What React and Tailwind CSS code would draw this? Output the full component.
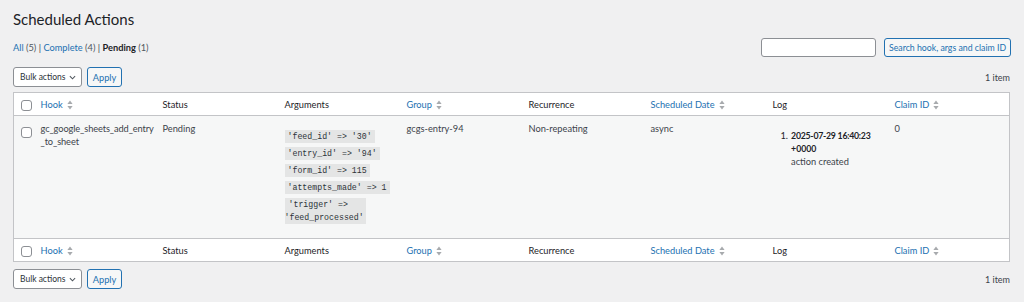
import React from 'react';

const font = { fontFamily: 'Lato, "Noto Sans", sans-serif' };
const mono = { fontFamily: '"Liberation Mono", "DejaVu Sans Mono", monospace' };

function SortIcon() {
  return (
    <svg width="6" height="10" viewBox="0 0 6 10" className="ml-[4px] inline-block align-middle -mt-[1px]">
      <path d="M3 0.5 L5.6 4 H0.4 Z" fill="#a7aaad" />
      <path d="M3 9.5 L5.6 6 H0.4 Z" fill="#a7aaad" />
    </svg>
  );
}

function Checkbox() {
  return <span className="inline-block w-[11px] h-[11px] rounded-[3px] border border-[#8c8f94] bg-white align-middle" />;
}

function Bulk() {
  return (
    <div className="flex items-center gap-[5px]">
      <div className="h-[20px] w-[69px] flex items-center justify-between pl-[6px] pr-[5px] border border-[#8c8f94] rounded-[3px] bg-white text-[8.5px] text-[#2c3338] whitespace-nowrap">
        <span>Bulk actions</span>
        <svg width="7" height="7" viewBox="0 0 8 8"><path d="M1 2.5 L4 5.5 L7 2.5" fill="none" stroke="#50575e" strokeWidth="1.2" /></svg>
      </div>
      <div className="h-[20px] w-[35px] flex items-center justify-center border border-[#2271b1] rounded-[3px] bg-[#f6f7f7] text-[9.25px] text-[#2271b1]">
        Apply
      </div>
    </div>
  );
}

const cols = [
  { label: 'Hook', sort: true },
  { label: 'Status' },
  { label: 'Arguments' },
  { label: 'Group', sort: true },
  { label: 'Recurrence' },
  { label: 'Scheduled Date', sort: true },
  { label: 'Log' },
  { label: 'Claim ID', sort: true },
];

function HeadRow({ bottom }) {
  return (
    <tr className={bottom ? 'border-t border-[#c3c4c7]' : 'border-b border-[#c3c4c7]'}>
      <td className="pl-[7px] h-[23px] align-middle"><Checkbox /></td>
      {cols.map((c) => (
        <td key={c.label} className="px-[7px] align-middle whitespace-nowrap">
          <span className={c.sort ? 'text-[#2271b1]' : 'text-[#1d2327]'}>{c.label}</span>
          {c.sort && <SortIcon />}
        </td>
      ))}
    </tr>
  );
}

const args = [
  "'feed_id' => '30'",
  "'entry_id' => '94'",
  "'form_id' => 115",
  "'attempts_made' => 1",
];

export default function App() {
  return (
    <div className="w-[1024px] h-[302px] bg-[#f0f0f1] text-[#3c434a] text-[9.25px] leading-[13px] px-[13px] pt-[8px]" style={font}>
      <h1 className="text-[15px] leading-[22px] text-[#1d2327] font-normal">Scheduled Actions</h1>
      <div className="flex items-start justify-between mt-[8px]">
        <div className="pt-[3px] text-[9.25px] whitespace-nowrap">
          <a className="text-[#2271b1]">All</a> <span className="text-[#50575e]">(5)</span> |{' '}
          <a className="text-[#2271b1]">Complete</a> <span className="text-[#50575e]">(4)</span> |{' '}
          <span className="font-bold text-[#1d2327]">Pending</span> <span className="text-[#50575e]">(1)</span>
        </div>
        <div className="flex items-center gap-[8px]">
          <div className="w-[115px] h-[19px] bg-white border border-[#8c8f94] rounded-[3px]" />
          <div className="h-[19px] w-[127px] flex items-center justify-center border border-[#2271b1] rounded-[3px] bg-[#f6f7f7] text-[8.75px] text-[#2271b1] whitespace-nowrap">
            Search hook, args and claim ID
          </div>
        </div>
      </div>
      <div className="flex items-center justify-between mt-[10px]">
        <Bulk />
        <span className="text-[9px] text-[#3c434a] pr-[1px]">1 item</span>
      </div>
      <table className="mt-[5px] w-[997px] table-fixed border border-[#c3c4c7] bg-white border-collapse">
        <colgroup>
          <col className="w-[20px]" />
          {cols.map((c) => <col key={c.label} className="w-[122px]" />)}
        </colgroup>
        <thead>
          <HeadRow />
        </thead>
        <tbody>
          <tr className="bg-[#f6f7f7] align-top">
            <td className="pl-[7px] pt-[9px]"><Checkbox /></td>
            <td className="px-[7px] pt-[6px] whitespace-nowrap tracking-[-0.1px]">gc_google_sheets_add_entry<br />_to_sheet</td>
            <td className="px-[7px] pt-[6px]">Pending</td>
            <td className="px-[7px] pt-[14px] pb-[14px]">
              <div className="flex flex-col items-start gap-[4px] text-[8.25px] leading-[13px] text-[#2c3338]" style={mono}>
                {args.map((a) => (
                  <span key={a} className="bg-[#e4e5e5] px-[3px] whitespace-pre">{a}</span>
                ))}
                <span className="bg-[#e4e5e5] pr-[2px]">
                  <span className="pl-[4px] whitespace-pre">'trigger' =&gt;</span>
                  <br />
                  <span className="whitespace-pre">'feed_processed'</span>
                </span>
              </div>
            </td>
            <td className="px-[7px] pt-[6px]">gcgs-entry-94</td>
            <td className="px-[7px] pt-[6px]">Non-repeating</td>
            <td className="px-[7px] pt-[6px]">async</td>
            <td className="px-[7px] pt-[13px]">
              <ol className="pl-[8px] text-[#1d2327]">
                <li className="flex gap-[3px]">
                  <span>1.</span>
                  <div>
                    <div className="font-bold whitespace-nowrap text-[8.75px] tracking-[-0.25px]">2025-07-29 16:40:23</div>
                    <div className="font-bold text-[8.75px]">+0000</div>
                    <div className="text-[#3c434a]">action created</div>
                  </div>
                </li>
              </ol>
            </td>
            <td className="px-[7px] pt-[6px]">0</td>
          </tr>
        </tbody>
        <tfoot>
          <HeadRow bottom />
        </tfoot>
      </table>
      <div className="flex items-center justify-between mt-[7px]">
        <Bulk />
        <span className="text-[9px] text-[#3c434a] pr-[1px]">1 item</span>
      </div>
    </div>
  );
}
